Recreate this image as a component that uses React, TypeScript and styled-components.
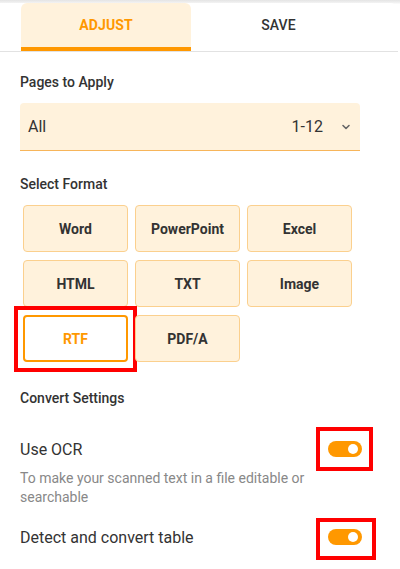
import React, { useState } from 'react'
import styled, { createGlobalStyle } from 'styled-components'

const GlobalStyle = createGlobalStyle`
  html, body {
    margin: 0;
    padding: 0;
    background: #ffffff;
    font-family: Roboto, "Liberation Sans", Arial, sans-serif;
    color: #333333;
  }
  * { box-sizing: border-box; }
`

const ORANGE = '#ff9800'
const CREAM = '#fff2dc'

const formats = ['Word', 'PowerPoint', 'Excel', 'HTML', 'TXT', 'Image', 'RTF', 'PDF/A']

interface MarkBox {
  top: number
  right: number
  bottom: number
  left: number
}

export default function App() {
  const [tab, setTab] = useState('adjust')
  const [format, setFormat] = useState('RTF')
  const [ocr, setOcr] = useState(true)
  const [table, setTable] = useState(true)

  return (
    <>
      <GlobalStyle />
      <SPage>
        <SPanel>
          <STabs>
            <STab active={tab === 'adjust'} onClick={() => setTab('adjust')}>ADJUST</STab>
            <STab active={tab === 'save'} onClick={() => setTab('save')}>SAVE</STab>
          </STabs>

          <SContent>
            <SLabel>Pages to Apply</SLabel>
            <SSelect>
              <span>All</span>
              <SSelectRight>
                <span>1-12</span>
                <svg width="10" height="10" viewBox="0 0 10 10" fill="none" stroke="#666" strokeWidth="1.6" strokeLinecap="round" strokeLinejoin="round">
                  <path d="M2 3.5l3 3 3-3" />
                </svg>
              </SSelectRight>
            </SSelect>

            <SLabel gap={23}>Select Format</SLabel>
            <SGrid>
              {formats.map((f) => (
                <SFormat key={f} selected={format === f} onClick={() => setFormat(f)}>
                  {f}
                </SFormat>
              ))}
            </SGrid>

            <SLabel gap={26}>Convert Settings</SLabel>
            <SSettingRow height={36} gap={23}>
              <SSettingText>Use OCR</SSettingText>
              <Toggle on={ocr} onClick={() => setOcr(!ocr)} mark={{ top: 14, right: 11, bottom: 14, left: 12 }} />
            </SSettingRow>
            <SHint>To make your scanned text in a file editable or searchable</SHint>
            <SSettingRow height={32} gap={14}>
              <SSettingText>Detect and convert table</SSettingText>
              <Toggle on={table} onClick={() => setTable(!table)} mark={{ top: 11, right: 14, bottom: 15, left: 12 }} />
            </SSettingRow>
          </SContent>
        </SPanel>
      </SPage>
    </>
  )
}

const Toggle = (props: { on: boolean; onClick: () => void; mark: MarkBox }) => {
  const { on, onClick, mark } = props
  return (
    <SToggle on={on} onClick={onClick} mark={mark}>
      <SKnob on={on} />
    </SToggle>
  )
}

const SPage = styled.div`
  min-height: 569px;
  padding-top: 3px;
  background: linear-gradient(#e4e4e4 0px, #f3f3f3 3px, #ffffff 4px);
`

const SPanel = styled.div`
  width: 398px;
  min-height: 566px;
  background: #ffffff;
  border-top-right-radius: 8px;
`

const STabs = styled.div`
  display: flex;
  padding-left: 21px;
  border-bottom: 1px solid #e2e2e2;
`

const STab = styled.div<{ active: boolean }>`
  width: 170px;
  height: 48px;
  display: flex;
  align-items: center;
  justify-content: center;
  font-size: 14px;
  font-weight: ${(p) => (p.active ? 700 : 500)};
  letter-spacing: 0.1px;
  color: ${(p) => (p.active ? ORANGE : '#333333')};
  background: ${(p) => (p.active ? CREAM : 'transparent')};
  border-radius: 6px 6px 0 0;
  border-bottom: 4px solid ${(p) => (p.active ? ORANGE : 'transparent')};
  cursor: pointer;
  &:last-child {
    padding-left: 5px;
  }
`

const SContent = styled.div`
  padding: 20px 38px 0 20px;
`

const SLabel = styled.div<{ gap?: number }>`
  font-size: 14px;
  font-weight: 500;
  line-height: 20px;
  color: #333333;
  margin-top: ${(p) => p.gap ?? 0}px;
`

const SSelect = styled.div`
  margin-top: 11px;
  height: 48px;
  width: 340px;
  display: flex;
  align-items: center;
  justify-content: space-between;
  padding: 0 9px 0 8px;
  background: ${CREAM};
  border-radius: 4px 4px 0 0;
  border-bottom: 1px solid #f7b55a;
  font-size: 16px;
  color: #333333;
`

const SSelectRight = styled.div`
  display: flex;
  align-items: center;
  gap: 18px;
`

const SGrid = styled.div`
  margin: 11px 0 0 3px;
  display: grid;
  grid-template-columns: repeat(3, 105px);
  grid-auto-rows: 47px;
  column-gap: 7px;
  row-gap: 8px;
`

const SFormat = styled.div<{ selected: boolean }>`
  position: relative;
  display: flex;
  align-items: center;
  justify-content: center;
  font-size: 14px;
  font-weight: 700;
  color: ${(p) => (p.selected ? ORANGE : '#333333')};
  background: ${(p) => (p.selected ? '#ffffff' : CREAM)};
  border: ${(p) => (p.selected ? `2px solid ${ORANGE}` : '1px solid #fbd08e')};
  border-radius: 4px;
  cursor: pointer;
  &::after {
    content: '';
    display: ${(p) => (p.selected ? 'block' : 'none')};
    position: absolute;
    top: -11px;
    right: -11px;
    bottom: -12px;
    left: -11px;
    border: 4px solid #ff0000;
    pointer-events: none;
  }
`

const SSettingRow = styled.div<{ height: number; gap: number }>`
  margin-top: ${(p) => p.gap}px;
  margin-right: -2px;
  height: ${(p) => p.height}px;
  display: flex;
  align-items: center;
  justify-content: space-between;
`

const SSettingText = styled.div`
  font-size: 16px;
  color: #333333;
`

const SHint = styled.div`
  margin-top: 2px;
  font-size: 14px;
  line-height: 19px;
  color: #888888;
  width: 300px;
`

const SToggle = styled.div<{ on: boolean; mark: MarkBox }>`
  position: relative;
  width: 34px;
  height: 16px;
  border-radius: 8px;
  background: ${(p) => (p.on ? ORANGE : '#cccccc')};
  cursor: pointer;
  &::after {
    content: '';
    position: absolute;
    top: -${(p) => p.mark.top}px;
    right: -${(p) => p.mark.right}px;
    bottom: -${(p) => p.mark.bottom}px;
    left: -${(p) => p.mark.left}px;
    border: 4px solid #ff0000;
    pointer-events: none;
  }
`

const SKnob = styled.span<{ on: boolean }>`
  position: absolute;
  top: 3px;
  left: ${(p) => (p.on ? '20px' : '4px')};
  width: 10px;
  height: 10px;
  border-radius: 50%;
  background: #ffffff;
`
